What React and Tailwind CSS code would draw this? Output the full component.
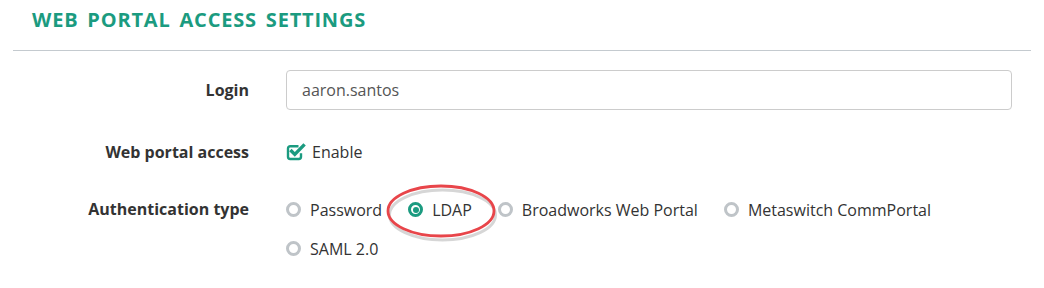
import React from "react";

const font = { fontFamily: '"Open Sans", "Noto Sans", sans-serif' };

function Radio({ label, checked, circled }) {
  return (
    <label className="relative inline-flex items-center mr-[26px] h-[39px] cursor-pointer">
      {circled && (
        <svg className="absolute left-[-22px] top-[-6px] pointer-events-none" width="112" height="60" viewBox="0 0 112 60">
          <ellipse cx="55" cy="29" rx="53" ry="25" fill="none" stroke="#000" strokeOpacity="0.16" strokeWidth="3" transform="translate(1.5 2)" />
          <ellipse cx="55" cy="27" rx="53" ry="25" fill="none" stroke="#e8454a" strokeWidth="2.8" />
        </svg>
      )}
      {checked ? (
        <span className="shrink-0 w-[15px] h-[15px] rounded-full border-[3px] border-[#1b9b80] flex items-center justify-center">
          <span className="w-[6px] h-[6px] rounded-full bg-[#1b9b80]" />
        </span>
      ) : (
        <span className="shrink-0 w-[15px] h-[15px] rounded-full border-[3px] border-[#bfc4c8]" />
      )}
      <span className="ml-[9px] text-[16px] text-[#333]">{label}</span>
    </label>
  );
}

export default function App() {
  return (
    <div className="w-[1044px] h-[288px] bg-white" style={font}>
      <div className="px-[13px]">
        <h2 className="pl-[19px] pt-[5px] pb-[15px] text-[20px] leading-[30px] font-bold uppercase tracking-[0.8px] [word-spacing:3px] text-[#1b9b80]">
          Web Portal Access Settings
        </h2>
        <div className="h-px bg-[#c4cacf]" />
      </div>

      <div className="pt-[19px] pr-[32px]">
        {/* Login */}
        <div className="flex items-center">
          <div className="w-[249px] text-right text-[16px] font-bold text-[#333]">Login</div>
          <div className="ml-[37px] flex-1">
            <input
              type="text"
              defaultValue="aaron.santos"
              className="w-full h-[40px] px-[15px] border border-[#cccccc] rounded-[4px] text-[16px] text-[#555] outline-none"
              style={font}
            />
          </div>
        </div>

        {/* Web portal access */}
        <div className="flex items-center mt-[22px] h-[40px]">
          <div className="w-[249px] text-right text-[16px] font-bold text-[#333]">Web portal access</div>
          <div className="ml-[37px] flex items-center">
            <svg width="20" height="19" viewBox="0 0 20 19" className="mr-[6px] -mt-[2px]">
              <path d="M12.5 4.2 H4.2 a2.2 2.2 0 0 0 -2.2 2.2 v8.4 a2.2 2.2 0 0 0 2.2 2.2 h8.6 a2.2 2.2 0 0 0 2.2 -2.2 v-3.6" fill="none" stroke="#1b9b80" strokeWidth="2.4" />
              <path d="M5.6 9.2 L8.8 12.4 L17.4 3.6" fill="none" stroke="#1b9b80" strokeWidth="3.4" strokeLinecap="square" />
            </svg>
            <span className="text-[16px] text-[#333]">Enable</span>
          </div>
        </div>

        {/* Authentication type */}
        <div className="flex items-start mt-[18px]">
          <div className="w-[249px] text-right text-[16px] font-bold text-[#333] leading-[39px]">Authentication type</div>
          <div className="ml-[37px] flex-1 flex flex-wrap">
            <Radio label="Password" />
            <Radio label="LDAP" checked circled />
            <Radio label="Broadworks Web Portal" />
            <Radio label="Metaswitch CommPortal" />
            <Radio label="SAML 2.0" />
          </div>
        </div>
      </div>
    </div>
  );
}
